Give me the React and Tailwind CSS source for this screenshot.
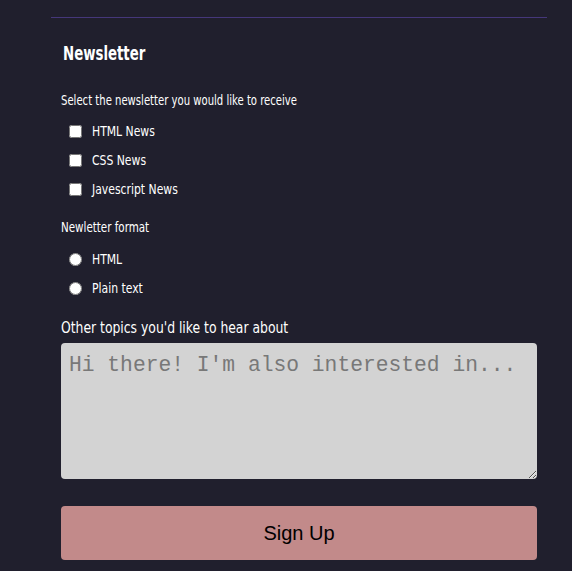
const condensed = { fontFamily: '"DejaVu Sans Condensed", "DejaVu Sans", sans-serif' };

function Narrow({ children, className = "" }) {
  // squeeze DejaVu Condensed a bit further to get close to the narrow display face
  return <span className={`inline-block origin-left whitespace-nowrap ${className}`}>{children}</span>;
}

export default function App() {
  const newsletters = ["HTML News", "CSS News", "Javescript News"];
  const formats = ["HTML", "Plain text"];

  return (
    <div className="min-h-[571px] w-full bg-[#201f2d] pt-[17px]">
      <div className="ml-[51px] w-[496px] border-t border-[#45377a]">
        <form className="px-[10px] text-white" style={condensed}>
          <h2 className="ml-[2px] mt-[21px] text-[20px] font-bold leading-[28px]">
            <Narrow className="scale-x-[0.74]">Newsletter</Narrow>
          </h2>

          <p className="mt-[24px] text-[14px] leading-[18px]">
            <Narrow className="scale-x-[0.8]">Select the newsletter you would like to receive</Narrow>
          </p>
          <div className="mt-[8px] flex flex-col">
            {newsletters.map((n) => (
              <label key={n} className="flex h-[29px] items-center text-[14px]">
                <input type="checkbox" className="ml-[8px] mr-[10px] h-[13px] w-[13px]" />
                <Narrow className="scale-x-[0.86]">{n}</Narrow>
              </label>
            ))}
          </div>

          <p className="mt-[14px] text-[14px] leading-[18px]">
            <Narrow className="scale-x-[0.82]">Newletter format</Narrow>
          </p>
          <div className="mt-[9px] flex flex-col">
            {formats.map((f) => (
              <label key={f} className="flex h-[29px] items-center text-[14px]">
                <input type="radio" name="format" className="ml-[8px] mr-[10px] h-[13px] w-[13px]" />
                <Narrow className="scale-x-[0.86]">{f}</Narrow>
              </label>
            ))}
          </div>

          <p className="mt-[15px] text-[16px] leading-[20px]">
            <Narrow className="scale-x-[0.86]">Other topics you'd like to hear about</Narrow>
          </p>
          <textarea
            placeholder="Hi there! I'm also interested in..."
            className="mt-[5px] block h-[136px] w-full rounded-[4px] bg-[#d3d3d3] px-[8px] pb-[6px] pt-[7px] text-[21.3px] text-black placeholder:text-[#787878]"
            style={{ fontFamily: '"Liberation Mono", monospace' }}
          />

          <button
            type="button"
            className="mt-[27px] block h-[54px] w-full rounded-[4px] bg-[#c28a8a] text-[20px] text-black"
            style={{ fontFamily: '"Liberation Sans", Arial, sans-serif' }}
          >
            Sign Up
          </button>
        </form>
      </div>
    </div>
  );
}
